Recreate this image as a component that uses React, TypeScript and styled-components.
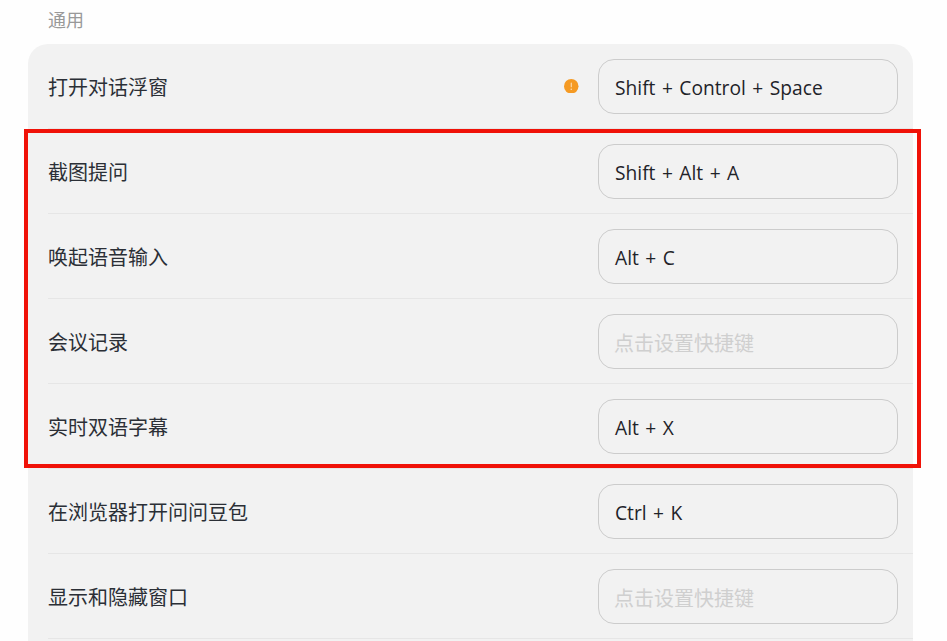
import React from "react";
import styled, { createGlobalStyle } from "styled-components";

const Global = createGlobalStyle`
  html, body { margin: 0; padding: 0; background: #fefefe; }
  body { width: 947px; height: 641px; overflow: hidden; font-family: "Open Sans", "Noto Sans CJK SC", sans-serif; }
`;

const Page = styled.div`
  position: relative;
  width: 947px;
  height: 641px;
  overflow: hidden;
  padding: 0 34px 0 28px;
  box-sizing: border-box;
`;

const SectionTitle = styled.div`
  height: 44px;
  padding: 7px 0 0 20px;
  box-sizing: border-box;
  font-size: 18px;
  line-height: 26px;
  color: #999999;
`;

const Card = styled.div`
  background: #f2f2f2;
  border-radius: 20px 20px 0 0;
  padding-left: 20px;
`;

const Row = styled.div`
  display: flex;
  align-items: center;
  height: 85px;
  box-sizing: border-box;
  padding-right: 15px;
  border-bottom: 1px solid #e6e6e6;
`;

const Label = styled.div`
  flex: 1;
  padding-top: 4px;
  font-size: 20px;
  line-height: 28px;
  color: #2b2f36;
`;

const Warning = styled.svg`
  width: 14.5px;
  height: 14.5px;
  margin-right: 19.5px;
  flex: none;
`;

const Shortcut = styled.div<{ $empty?: boolean }>`
  width: 300px;
  height: 55px;
  box-sizing: border-box;
  padding: 2px ${(p) => (p.$empty ? "15px" : "16px")} 0;
  display: flex;
  align-items: center;
  border: 1px solid #cccccc;
  border-radius: 16px;
  font-size: ${(p) => (p.$empty ? "20px" : "19.2px")};
  word-spacing: ${(p) => (p.$empty ? "0" : "1.5px")};
  color: ${(p) => (p.$empty ? "#cfcfcf" : "#1f2329")};
`;

const Highlight = styled.div`
  position: absolute;
  left: 24px;
  top: 129px;
  width: 897px;
  height: 339px;
  box-sizing: border-box;
  border: 4px solid #f01208;
  pointer-events: none;
`;

const rows = [
  { label: "打开对话浮窗", keys: "Shift + Control + Space", warn: true },
  { label: "截图提问", keys: "Shift + Alt + A" },
  { label: "唤起语音输入", keys: "Alt + C" },
  { label: "会议记录" },
  { label: "实时双语字幕", keys: "Alt + X" },
  { label: "在浏览器打开问问豆包", keys: "Ctrl + K" },
  { label: "显示和隐藏窗口" },
  { label: "" },
];

export default function App() {
  return (
    <Page>
      <Global />
      <SectionTitle>通用</SectionTitle>
      <Card>
        {rows.map((r, i) => (
          <Row key={i}>
            <Label>{r.label}</Label>
            {r.warn && (
              <Warning viewBox="0 0 14 14">
                <circle cx="7" cy="7" r="7" fill="#f59a23" />
                <rect x="6.5" y="3.4" width="1" height="4.6" rx="0.5" fill="#fde3c0" />
                <circle cx="7" cy="9.8" r="0.7" fill="#fde3c0" />
              </Warning>
            )}
            {r.label && (
              <Shortcut $empty={!r.keys}>{r.keys ?? "点击设置快捷键"}</Shortcut>
            )}
          </Row>
        ))}
      </Card>
      <Highlight />
    </Page>
  );
}
